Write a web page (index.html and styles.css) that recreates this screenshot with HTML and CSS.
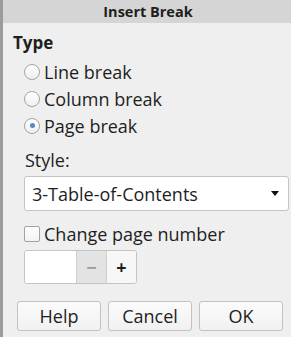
FILE: index.html
```html
<!DOCTYPE html>
<html lang="en">
<head>
  <meta charset="UTF-8" />
  <meta name="viewport" content="width=device-width, initial-scale=1.0"/>
  <title>Insert Break</title>
  <link rel="stylesheet" href="styles.css">
</head>
<body>

  <div class="janela">
    <div class="titulo">Insert Break</div>

    <main class="conteudo">
      <div class="secao">Type</div>

      <div class="opcoes">
        <label class="opcao">
          <span class="radio"></span>
          <span>Line break</span>
        </label>
        <label class="opcao">
          <span class="radio"></span>
          <span>Column break</span>
        </label>
        <label class="opcao">
          <span class="radio marcado"></span>
          <span>Page break</span>
        </label>
      </div>

      <div class="rotulo">Style:</div>
      <div class="combo">
        <span>3-Table-of-Contents</span>
        <span class="seta"></span>
      </div>

      <label class="opcao checagem">
        <span class="caixa"></span>
        <span>Change page number</span>
      </label>

      <div class="spin">
        <div class="spin-valor"></div>
        <div class="spin-botao menos">−</div>
        <div class="spin-botao mais">+</div>
      </div>

      <div class="botoes">
        <button>Help</button>
        <button>Cancel</button>
        <button>OK</button>
      </div>
    </main>
  </div>

</body>
</html>
```

FILE: styles.css
```css
html, body {
  margin: 0;
  padding: 0;
  background-color: #efefef;
}

body {
  font-family: 'Open Sans', 'Noto Sans', sans-serif;
  color: #1e1e1e;
  font-size: 18px;
}

.janela {
  height: 337px;
  border-left: 3px solid #9b9b9b;
  box-sizing: border-box;
  background-color: #efefef;
}

.titulo {
  height: 23px;
  line-height: 23px;
  background-color: #d5d5d5;
  text-align: center;
  font-weight: bold;
  font-size: 14.5px;
  padding-left: 2px;
}

.conteudo {
  padding: 8px 0 0 7px;
}

.secao {
  height: 24px;
  line-height: 24px;
  font-weight: bold;
  font-size: 17px;
  padding-left: 3px;
}

.opcoes {
  margin-top: 3px;
  padding-left: 14px;
}

.opcao {
  display: flex;
  align-items: center;
  gap: 4px;
  height: 27px;
}

.radio {
  width: 14px;
  height: 14px;
  border: 1px solid #a3a3a3;
  border-radius: 50%;
  background: linear-gradient(#ffffff, #f0f0f0);
  display: flex;
  align-items: center;
  justify-content: center;
}

.radio.marcado::after {
  content: "";
  width: 5px;
  height: 5px;
  border-radius: 50%;
  background-color: #5a86c5;
}

.rotulo {
  margin-top: 10px;
  padding-left: 15px;
  height: 23px;
  line-height: 23px;
}

.combo {
  margin: 4px 2px 0 14px;
  height: 33px;
  background-color: #fff;
  border: 1px solid #c4c4c4;
  border-radius: 3px;
  display: flex;
  align-items: center;
  justify-content: space-between;
  padding: 0 9px 0 7px;
}

.seta {
  width: 0;
  height: 0;
  border-left: 4px solid transparent;
  border-right: 4px solid transparent;
  border-top: 5px solid #111;
}

.checagem {
  margin-top: 12px;
  padding-left: 14px;
  height: 22px;
}

.caixa {
  width: 14px;
  height: 14px;
  border: 1px solid #a3a3a3;
  border-radius: 2px;
  background: linear-gradient(#ffffff, #f2f2f2);
}

.spin {
  margin: 5px 0 0 14px;
  width: 113px;
  height: 34px;
  display: flex;
  border: 1px solid #c4c4c4;
  border-radius: 3px;
  box-sizing: border-box;
  overflow: hidden;
}

.spin-valor {
  width: 51px;
  background-color: #fff;
}

.spin-botao {
  flex: 1;
  display: flex;
  align-items: center;
  justify-content: center;
  border-left: 1px solid #cfcfcf;
  font-size: 18px;
  font-weight: bold;
}

.menos {
  background-color: #e3e3e3;
  color: #9a9a9a;
}

.mais {
  background-color: #f7f7f7;
  color: #1e1e1e;
}

.botoes {
  margin: 17px 0 0 7px;
  display: flex;
  gap: 7px;
}

button {
  width: 84px;
  height: 30px;
  font-family: inherit;
  font-size: 18px;
  color: #1e1e1e;
  background: linear-gradient(#fbfbfb, #f1f1f1);
  border: 1px solid #c2c2c2;
  border-radius: 3px;
  padding: 0;
}
```
